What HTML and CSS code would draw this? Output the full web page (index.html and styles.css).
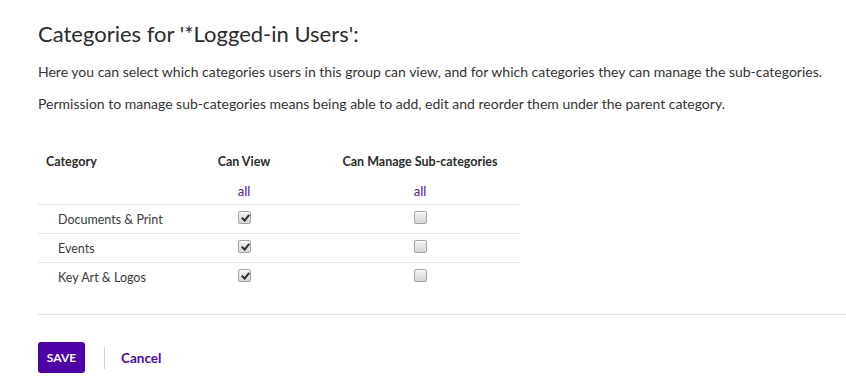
FILE: index.html
```html
<!DOCTYPE html>
<html lang="en">
<head>
<meta charset="utf-8">
<title>Category permissions</title>
<link rel="stylesheet" href="styles.css">
</head>
<body>
<div class="page">
  <h1 class="title">Categories for '*Logged-in Users':</h1>
  <p class="intro">Here you can select which categories users in this group can view, and for which categories they can manage the sub-categories.</p>
  <p class="intro">Permission to manage sub-categories means being able to add, edit and reorder them under the parent category.</p>

  <table class="perms">
    <colgroup>
      <col class="col-name">
      <col class="col-view">
      <col class="col-manage">
    </colgroup>
    <thead>
      <tr class="head-row">
        <th class="name-head">Category</th>
        <th>Can View</th>
        <th>Can Manage Sub-categories</th>
      </tr>
      <tr class="all-row">
        <th></th>
        <th><a class="link" href="#">all</a></th>
        <th><a class="link" href="#">all</a></th>
      </tr>
    </thead>
    <tbody>
      <tr class="item">
        <td class="name">Documents &amp; Print</td>
        <td><input class="box" type="checkbox" checked></td>
        <td><input class="box" type="checkbox"></td>
      </tr>
      <tr class="item">
        <td class="name">Events</td>
        <td><input class="box" type="checkbox" checked></td>
        <td><input class="box" type="checkbox"></td>
      </tr>
      <tr class="item">
        <td class="name">Key Art &amp; Logos</td>
        <td><input class="box" type="checkbox" checked></td>
        <td><input class="box" type="checkbox"></td>
      </tr>
    </tbody>
  </table>

  <hr class="rule">

  <div class="actions">
    <button class="save" type="button">SAVE</button>
    <span class="sep"></span>
    <a class="cancel" href="#">Cancel</a>
  </div>
</div>
</body>
</html>
```

FILE: styles.css
```css
html, body {
  margin: 0;
  padding: 0;
  background: #ffffff;
}

body {
  font-family: Lato, "Open Sans", sans-serif;
  color: #333333;
}

.page {
  padding: 19px 0 0 38px;
}

.title {
  margin: 0;
  font-size: 22px;
  line-height: 30px;
  font-weight: 400;
  color: #2b2b2b;
}

.intro {
  margin: 13px 0 0;
  font-size: 14px;
  line-height: 20px;
  color: #333333;
}

.intro + .intro {
  margin-top: 12px;
}

.perms {
  margin-top: 31px;
  border-collapse: collapse;
  width: 481px;
  table-layout: fixed;
  font-size: 12.5px;
}

.col-name { width: 129px; }
.col-view { width: 154px; }
.col-manage { width: 198px; }

.perms th {
  font-weight: 700;
  text-align: center;
  padding: 0;
  color: #2b2b2b;
}

.head-row th {
  height: 32px;
}

.perms th.name-head {
  text-align: left;
  padding-left: 8px;
}

.all-row th {
  height: 27px;
  vertical-align: middle;
  font-weight: 400;
  font-size: 13px;
}

.link {
  color: #4b0aa8;
  text-decoration: none;
}

.item td {
  border-top: 1px solid #e6e6e6;
  height: 28px;
  padding: 0;
  text-align: center;
  vertical-align: middle;
}

.item td.name {
  text-align: left;
  padding-left: 20px;
  color: #3a3a3a;
}

.box {
  appearance: none;
  -webkit-appearance: none;
  position: relative;
  display: block;
  width: 13px;
  height: 13px;
  margin: 0 auto 3px;
  border: 1px solid #a3a3a3;
  border-radius: 2px;
  background: linear-gradient(#f2f2f2, #d6d6d6);
  box-shadow: inset 0 1px 0 #ffffff;
}

.box:checked::after {
  content: "";
  position: absolute;
  left: 4px;
  top: 1px;
  width: 3px;
  height: 6px;
  border-right: 2px solid #2c2c2c;
  border-bottom: 2px solid #2c2c2c;
  transform: rotate(40deg);
}

.rule {
  margin: 23px 0 0;
  border: 0;
  border-top: 1px solid #dddddd;
  height: 0;
}

.actions {
  display: flex;
  align-items: center;
  margin-top: 27px;
}

.save {
  width: 47px;
  height: 31px;
  border: 0;
  border-radius: 3px;
  background: #4e00a6;
  color: #ffffff;
  font-family: inherit;
  font-size: 12px;
  font-weight: 700;
  padding: 0;
}

.sep {
  width: 1px;
  height: 22px;
  background: #d0d0d0;
  margin-left: 19px;
}

.cancel {
  margin-left: 16px;
  color: #4b0aa8;
  text-decoration: none;
  font-size: 13.5px;
  font-weight: 700;
}
```
